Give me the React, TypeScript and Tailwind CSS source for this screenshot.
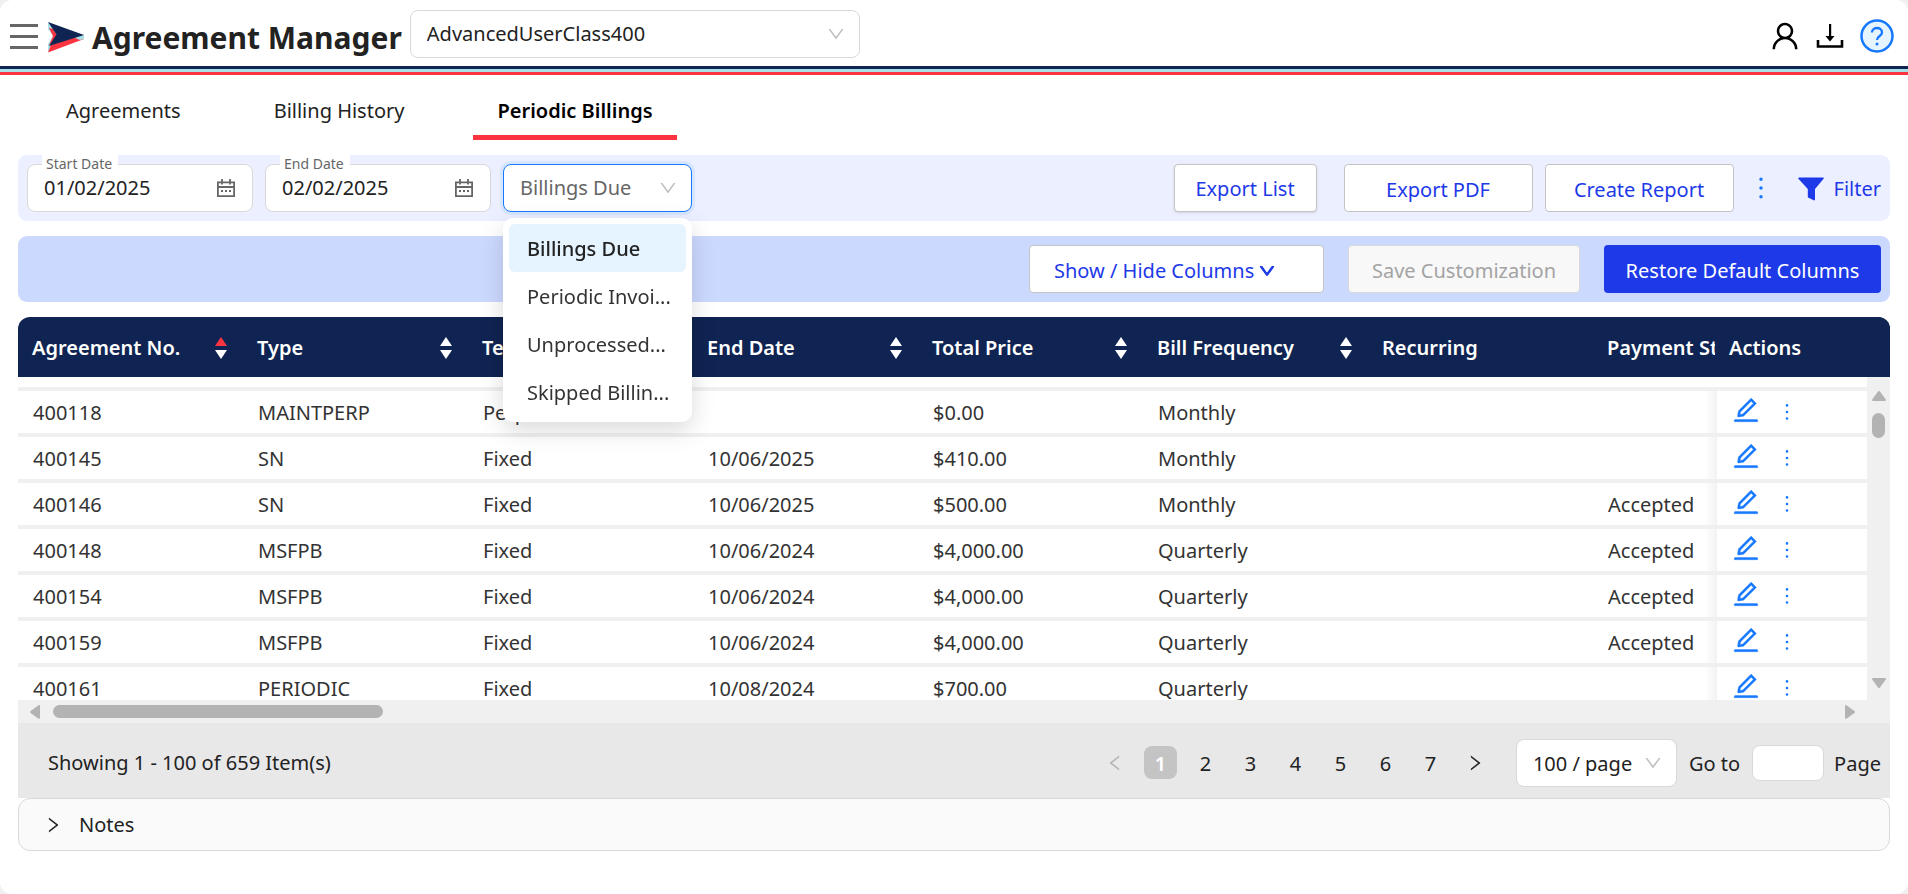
import type { ReactNode } from 'react';
import {
  AiOutlineDown,
  AiOutlineEdit,
  AiOutlineLeft,
  AiOutlineMore,
  AiOutlineRight,
  AiOutlineUser,
} from 'react-icons/ai';

const columns = [
  { title: 'Agreement No.', sort: 'asc' },
  { title: 'Type', sort: 'none' },
  { title: 'Term', sort: 'none' },
  { title: 'End Date', sort: 'none' },
  { title: 'Total Price', sort: 'none' },
  { title: 'Bill Frequency', sort: 'none' },
  { title: 'Recurring', sort: '' },
  { title: 'Payment Status', sort: '' },
];

const rows = [
  ['400118', 'MAINTPERP', 'Perpetual', '', '$0.00', 'Monthly', '', ''],
  ['400145', 'SN', 'Fixed', '10/06/2025', '$410.00', 'Monthly', '', ''],
  ['400146', 'SN', 'Fixed', '10/06/2025', '$500.00', 'Monthly', '', 'Accepted'],
  ['400148', 'MSFPB', 'Fixed', '10/06/2024', '$4,000.00', 'Quarterly', '', 'Accepted'],
  ['400154', 'MSFPB', 'Fixed', '10/06/2024', '$4,000.00', 'Quarterly', '', 'Accepted'],
  ['400159', 'MSFPB', 'Fixed', '10/06/2024', '$4,000.00', 'Quarterly', '', 'Accepted'],
  ['400161', 'PERIODIC', 'Fixed', '10/08/2024', '$700.00', 'Quarterly', '', ''],
];

const billingOptions = ['Billings Due', 'Periodic Invoi...', 'Unprocessed...', 'Skipped Billin...'];

function Logo() {
  return (
    <svg className="h-8 w-9" viewBox="0 0 36 32" aria-hidden="true">
      <path d="M0 0 L5 6 L8 13 L4 24 L0 30 V22 L5 14 L0 7 Z" fill="#a9dfe6" />
      <path d="M1 6 L5 7 L9 13 L4 22 L1 23.500 L5 14 Z" fill="#fb3440" />
      <path d="M3 23 L28 15 L36 17 L0 30.500 Z" fill="#fb3440" />
      <path d="M26 15.500 L36 12.500 V17 L32 18 Z" fill="#a9dfe6" />
      <path d="M0 0 L36 13 L1 24 L8.500 12.500 Z" fill="#0f2452" />
    </svg>
  );
}

function CalendarIcon() {
  return (
    <svg className="h-[18px] w-[18px] shrink-0" viewBox="0 0 18 18" fill="none" stroke="#666" strokeWidth="1.800" aria-hidden="true">
      <path d="M.9 3.400h16.200v13.700H.9z M.9 8h16.200 M5 0v5.500 M13 0v5.500" />
      <path d="M4 12h2 M8 12h2 M12 12h2" />
    </svg>
  );
}

function DownloadIcon() {
  return (
    <svg className="h-7 w-7" viewBox="0 0 28 28" aria-hidden="true">
      <path d="M2 18v6.500h24V18" fill="none" stroke="#000" strokeWidth="2.600" />
      <path d="M13 2h2.200v12h3.300L14 19.500 9.500 14H13z" fill="#000" />
    </svg>
  );
}

function HelpIcon() {
  return (
    <svg className="h-[34px] w-[34px]" viewBox="0 0 34 34" fill="none" stroke="#1677ff" aria-hidden="true">
      <circle cx="17" cy="17" r="15.500" fill="#e6f4ff" strokeWidth="2.500" />
      <path d="M12 13.500c0-6 10-6 10 0 0 3.500-5 3.500-5 7.500" strokeWidth="2.300" />
      <circle cx="17" cy="25" r="1.500" fill="#1677ff" stroke="none" />
    </svg>
  );
}

function FilterIcon() {
  return (
    <svg className="h-6 w-[26px]" viewBox="0 0 26 24" fill="#1d39e8" aria-hidden="true">
      <path d="M1 .500h24c.8 0 1 .8.600 1.300L17 12v10.500c0 .8-.7 1.200-1.300.8L10.500 20.800c-.5-.3-.7-.6-.7-1.200V12L.4 1.800C0 1.300.2.500 1 .500z" />
    </svg>
  );
}

function Triangle({ className }: { className: string }) {
  return (
    <svg className={className} viewBox="0 0 14 10" fill="currentColor" aria-hidden="true">
      <path d="M6 .6a1.300 1.300 0 0 1 2 0l5.600 7.600c.6.900.2 1.800-.8 1.800H1.200C.2 10-.2 9.100.4 8.200z" />
    </svg>
  );
}

function SortIcon({ sort }: { sort: string }) {
  return (
    <svg className="h-[22px] w-3 shrink-0" viewBox="0 0 12 22" aria-hidden="true">
      <path d="M6 0 12 9H0z" fill={sort === 'asc' ? '#fb3440' : '#fff'} />
      <path d="M6 22 12 13H0z" fill="#fff" />
    </svg>
  );
}

function SelectArrow() {
  return <AiOutlineDown className="pointer-events-none absolute top-[14px] right-3.5 size-5 text-[#bfbfbf]" />;
}

function DateField({ id, label, value }: { id: string; label: string; value: string }) {
  return (
    <div className="relative flex h-12 w-[226px] items-center rounded-lg border border-[#d9d9d9] bg-white pr-[17px] pl-4">
      <label htmlFor={id} className="absolute -top-[11px] left-[14px] bg-white pr-1.5 pl-1 text-sm leading-5 text-[#666]">
        {label}
      </label>
      <input id={id} type="text" defaultValue={value} className="min-w-0 flex-1 outline-none" />
      <CalendarIcon />
    </div>
  );
}

function OutlineButton({ className, children }: { className: string; children: ReactNode }) {
  return (
    <button
      type="button"
      className={`flex h-12 items-center rounded border border-[#c4c4c4] bg-white text-[#1d39e8] ${className}`}
    >
      {children}
    </button>
  );
}

export default function App() {
  return (
    <div className="min-h-screen bg-[#f0f0f0] font-['Noto_Sans','Open_Sans',sans-serif] text-[20px] leading-7 text-[#222]">
      <div className="min-h-screen rounded-xl bg-white">
        {/* Header */}
        <header className="flex h-[66px] items-center pt-0.5 pr-3.5 pl-2.5">
          <button type="button" aria-label="Menu" className="mt-1 flex w-7 flex-col gap-2">
            <span className="h-[3px] bg-[#666]" />
            <span className="h-[3px] bg-[#666]" />
            <span className="h-[3px] bg-[#666]" />
          </button>
          <div className="mt-2 ml-2.5 flex items-center gap-2">
            <Logo />
            <h1 className="text-3xl leading-10 font-bold whitespace-nowrap">Agreement Manager</h1>
          </div>
          <div className="relative ml-2 w-[450px]">
            <select aria-label="User class" className="h-12 w-full appearance-none rounded-lg border border-[#d9d9d9] bg-white px-4">
              <option>AdvancedUserClass400</option>
            </select>
            <SelectArrow />
          </div>
          <div className="mt-1 ml-auto flex items-center gap-4 text-black">
            <button type="button" aria-label="Account" className="-mr-0.5">
              <AiOutlineUser className="size-[34px]" />
            </button>
            <button type="button" aria-label="Download">
              <DownloadIcon />
            </button>
            <button type="button" aria-label="Help">
              <HelpIcon />
            </button>
          </div>
        </header>
        <div className="h-[3px] bg-[#0f2452]" />
        <div className="h-[3px] bg-[#a9dfe6]" />
        <div className="h-[3px] bg-[#fb3440]" />

        {/* Tabs */}
        <nav className="flex h-[65px] gap-[45px] pl-[42px]">
          <a href="#agreements" className="flex items-center px-6 pt-1.5">Agreements</a>
          <a href="#history" className="flex items-center px-6 pt-1.5">Billing History</a>
          <a href="#periodic" className="flex items-center border-b-[5px] border-[#fb3440] px-6 pt-3 font-semibold text-black">
            Periodic Billings
          </a>
        </nav>

        <main className="px-[18px] pt-[15px]">
          {/* Filters */}
          <div className="flex h-[66px] items-center rounded-[9px] bg-[#ecefff] px-[9px]">
            <div className="flex gap-3">
              <DateField id="start" label="Start Date" value="01/02/2025" />
              <DateField id="end" label="End Date" value="02/02/2025" />
              <div className="relative w-[189px]">
                <select
                  aria-label="Billing status"
                  className="h-12 w-full appearance-none rounded-lg border border-[#1677ff] bg-white px-4 text-[#666] ring-3 ring-[#d6e6ff]"
                >
                  <option>Billings Due</option>
                </select>
                <SelectArrow />
                <ul
                  role="listbox"
                  aria-label="Billing status options"
                  className="absolute top-[54px] left-0 z-20 w-full rounded-[10px] bg-white p-1.5 shadow-[0_8px_24px_rgba(0,0,0,0.15)]"
                >
                  {billingOptions.map((option, i) => (
                    <li
                      key={option}
                      role="option"
                      aria-selected={i === 0}
                      className={`flex h-12 items-center rounded-md px-[18px] pt-0.5 whitespace-nowrap ${i === 0 ? 'bg-[#e6f4ff] font-medium' : 'text-[#333]'}`}
                    >
                      {option}
                    </li>
                  ))}
                </ul>
              </div>
            </div>
            <div className="ml-auto flex items-center">
              <OutlineButton className="mr-[27px] w-[143px] justify-center pt-0.5 shadow-sm">Export List</OutlineButton>
              <OutlineButton className="mr-3 w-[189px] justify-center pt-1">Export PDF</OutlineButton>
              <OutlineButton className="w-[189px] justify-center pt-1">Create Report</OutlineButton>
              <button type="button" aria-label="More" className="mx-[11px] text-[#1677ff]">
                <AiOutlineMore className="size-8" />
              </button>
              <button type="button" className="ml-2.5 flex items-center gap-2.5 pt-0.5 text-[#1d39e8]">
                <FilterIcon />
                Filter
              </button>
            </div>
          </div>

          {/* Column settings */}
          <div className="mt-[15px] flex h-[66px] items-center justify-end rounded-[9px] bg-[#ccd9ff] px-[9px]">
            <OutlineButton className="mr-6 w-[295px] gap-1 px-6 pt-1 whitespace-nowrap">
              Show / Hide Columns
              <AiOutlineDown className="size-[18px] shrink-0 stroke-[60]" />
            </OutlineButton>
            <button
              type="button"
              disabled
              className="mr-6 h-12 w-[232px] rounded border border-[#d9d9d9] bg-[#f8f8f8] pt-1 text-[#a3a3a3]"
            >
              Save Customization
            </button>
            <button type="button" className="h-12 w-[277px] rounded bg-[#1d39e8] pt-1 text-white">
              Restore Default Columns
            </button>
          </div>

          {/* Agreements grid */}
          <div className="mt-[15px] overflow-hidden rounded-t-xl bg-[#0f2452]">
            <table className="w-full min-w-[1975px] table-fixed border-separate border-spacing-0 text-white">
              <thead>
                <tr>
                  {columns.map((column) => (
                    <th key={column.title} className="h-[60px] w-[225px] pt-0.5 pr-4 pl-3.5 text-left font-semibold whitespace-nowrap">
                      <div className="flex items-center justify-between">
                        {column.title}
                        {column.sort && <SortIcon sort={column.sort} />}
                      </div>
                    </th>
                  ))}
                  <th className="sticky right-0 w-[175px] bg-[#0f2452] pt-0.5 pl-3.5 text-left font-semibold">Actions</th>
                </tr>
              </thead>
            </table>
          </div>
          <div className="flex h-[323px]">
            <div className="min-w-0 flex-1 overflow-hidden">
              <table className="w-full min-w-[1950px] table-fixed border-separate border-spacing-0">
                <tbody>
                  <tr aria-hidden="true">
                    {columns.map((column) => (
                      <td key={column.title} className="h-3.5 w-[225px] border-b-4 border-[#f0f0f0]" />
                    ))}
                    <td className="w-[150px] border-b-4 border-[#f0f0f0]" />
                  </tr>
                  {rows.map((row) => (
                    <tr key={row[0]}>
                      {row.map((cell, i) => (
                        <td key={columns[i].title} className="h-[46px] border-b-4 border-[#f0f0f0] pt-0.5 pl-[15px] whitespace-nowrap text-[#333]">
                          {cell}
                        </td>
                      ))}
                      <td className="sticky right-0 border-b-4 border-[#f0f0f0] bg-white pl-3.5 text-[#1677ff]">
                        <span className="absolute inset-y-0 -left-3 w-3 bg-linear-to-r from-transparent to-black/5" />
                        <div className="flex items-center gap-3.5">
                          <button type="button" aria-label={`Edit ${row[0]}`}>
                            <AiOutlineEdit className="mb-1 size-[30px] stroke-[12]" />
                          </button>
                          <button type="button" aria-label={`More actions for ${row[0]}`}>
                            <AiOutlineMore className="size-6" />
                          </button>
                        </div>
                      </td>
                    </tr>
                  ))}
                </tbody>
              </table>
            </div>
            <div className="flex w-[23px] flex-col items-center bg-[#f0f0f0] pt-3.5 pb-3 text-[#b3b3b3]">
              <Triangle className="h-2.5 w-3.5" />
              <span className="mt-3 h-[25px] w-[13px] rounded-full bg-[#b3b3b3]" />
              <Triangle className="mt-auto h-2.5 w-3.5 rotate-180" />
            </div>
          </div>
          <div className="flex h-[23px] items-center bg-[#f0f0f0] pr-[33px] pl-2.5 text-[#b3b3b3]">
            <Triangle className="h-2.5 w-3.5 -rotate-90" />
            <span className="ml-[11px] h-[13px] w-[330px] rounded-full bg-[#b3b3b3]" />
            <Triangle className="ml-auto h-2.5 w-3.5 rotate-90" />
          </div>

          {/* Pagination */}
          <div className="flex h-[75px] items-center bg-[#e8e8e8] pt-1 pr-[9px] pl-[30px]">
            <p>Showing 1 - 100 of 659 Item(s)</p>
            <div className="ml-auto flex items-center gap-3">
              <button type="button" aria-label="Previous page" className="flex w-[33px] justify-center text-[#b3b3b3]">
                <AiOutlineLeft className="size-5" />
              </button>
              <button type="button" className="h-[33px] w-[33px] rounded-lg bg-[#c4c4c4] pt-0.5 font-semibold text-white">1</button>
              {[2, 3, 4, 5, 6, 7].map((page) => (
                <button key={page} type="button" className="h-[33px] w-[33px] pt-0.5">{page}</button>
              ))}
              <button type="button" aria-label="Next page" className="flex w-[33px] justify-center">
                <AiOutlineRight className="size-5" />
              </button>
            </div>
            <div className="relative ml-6 w-[161px]">
              <select aria-label="Page size" className="h-12 w-full appearance-none rounded-lg border border-[#d9d9d9] bg-white px-4 pt-0.5">
                <option>100 / page</option>
              </select>
              <SelectArrow />
            </div>
            <label htmlFor="goto" className="ml-3 pt-0.5">Go to</label>
            <input id="goto" type="text" className="mr-2.5 ml-3 h-9 w-[72px] rounded-lg border border-[#d9d9d9] bg-white px-2" />
            <span className="pt-0.5">Page</span>
          </div>

          {/* Notes */}
          <button type="button" className="flex h-[53px] w-full items-center gap-4 rounded-xl border border-[#d9d9d9] bg-[#fafafa] px-6">
            <AiOutlineRight className="size-5" />
            Notes
          </button>
        </main>
      </div>
    </div>
  );
}
